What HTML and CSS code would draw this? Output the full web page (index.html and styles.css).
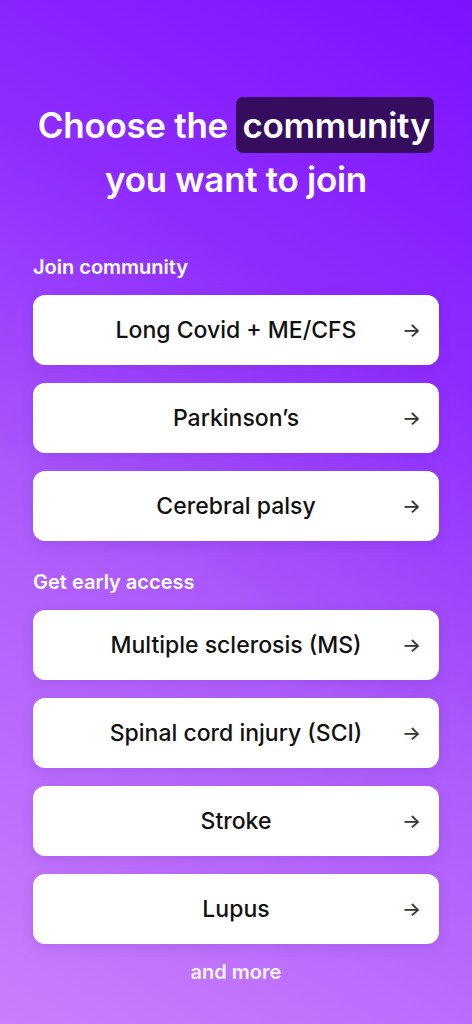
FILE: index.html
```html
<!DOCTYPE html>
<html>
<head>
  <title>Choose community</title>
  <link rel="stylesheet" href="styles.css">
</head>
<body>
  <div class="page">
    <h1 class="title">Choose the <span class="highlight">community</span><br>you want to join</h1>

    <div class="section-label">Join community</div>
    <div class="list">
      <a class="option" href="#"><span>Long Covid + ME/CFS</span><span class="arrow">&rarr;</span></a>
      <a class="option" href="#"><span>Parkinson’s</span><span class="arrow">&rarr;</span></a>
      <a class="option" href="#"><span>Cerebral palsy</span><span class="arrow">&rarr;</span></a>
    </div>

    <div class="section-label">Get early access</div>
    <div class="list">
      <a class="option" href="#"><span>Multiple sclerosis (MS)</span><span class="arrow">&rarr;</span></a>
      <a class="option" href="#"><span>Spinal cord injury (SCI)</span><span class="arrow">&rarr;</span></a>
      <a class="option" href="#"><span>Stroke</span><span class="arrow">&rarr;</span></a>
      <a class="option" href="#"><span>Lupus</span><span class="arrow">&rarr;</span></a>
    </div>

    <div class="more">and more</div>
  </div>
</body>
</html>
```

FILE: styles.css
```css
html, body {
  margin: 0;
  height: 100%;
}

body {
  font-family: Inter, "Noto Sans", sans-serif;
  background: linear-gradient(210deg, #7c12ff 0%, #8e2cff 30%, #ad5cfb 60%, #c97efd 100%);
  color: #fff;
}

.page {
  padding: 98px 33px 0;
  box-sizing: border-box;
  min-height: 1024px;
}

.title {
  margin: 0 0 49px;
  text-align: center;
  font-size: 35px;
  font-weight: 600;
  line-height: 54px;
  letter-spacing: -0.3px;
}

.highlight {
  background-color: #360c5e;
  border-radius: 7px;
  padding: 7px 4px 7px 6px;
}

.section-label {
  font-size: 20px;
  font-weight: 600;
  line-height: 24px;
  margin-bottom: 16px;
}

.list {
  display: flex;
  flex-direction: column;
  gap: 18px;
  margin-bottom: 29px;
}

.option {
  position: relative;
  display: flex;
  align-items: center;
  justify-content: center;
  height: 70px;
  background-color: #fff;
  border-radius: 12px;
  color: #111;
  text-decoration: none;
  font-size: 23px;
  font-weight: 500;
  box-shadow: 0 4px 14px rgba(60, 0, 120, 0.12);
}

.arrow {
  position: absolute;
  right: 18px;
  top: 50%;
  transform: translateY(-52%);
  font-size: 20px;
  color: #333;
}

.more {
  text-align: center;
  font-size: 20px;
  font-weight: 600;
  margin-top: -13px;
  color: #fbf3ff;
}
```
